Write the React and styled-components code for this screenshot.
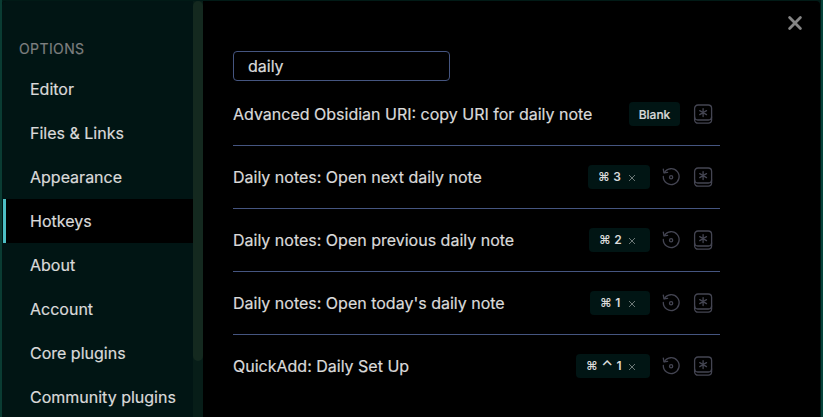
import React from "react";
import styled, { createGlobalStyle } from "styled-components";

const GlobalStyle = createGlobalStyle`
  * { box-sizing: border-box; }
  body { margin: 0; background: #07372d; overflow: hidden; }
`;

const Backdrop = styled.div`
  width: 823px;
  height: 417px;
  padding: 1px 3px 0 2px;
  background: linear-gradient(90deg, #0a3c33 0, #0a3c33 2px, #011a16 2px, #011a16 821px, #04443a 821px);
  font-family: Inter, "Noto Sans", sans-serif;
  font-size: 16px;
  color: #dadada;
`;

const Modal = styled.div`
  display: flex;
  height: 416px;
  border-radius: 4px 4px 0 0;
  background: #000;
  overflow: hidden;
`;

const Sidebar = styled.nav`
  width: 191px;
  flex: none;
  padding: 36px 0 0 1px;
  background: #011514;
`;

const SidebarTitle = styled.div`
  height: 30px;
  padding-left: 16px;
  line-height: 24px;
  font-size: 14px;
  letter-spacing: 0.4px;
  color: #7d7f7f;
  -webkit-text-stroke: 0.2px currentColor;
`;

const NavItem = styled.div`
  height: 44px;
  padding-left: 24px;
  border-left: 3px solid ${(p) => (p.$active ? "#4dbfc4" : "transparent")};
  background: ${(p) => (p.$active ? "#000" : "transparent")};
  line-height: 44px;
  white-space: nowrap;
  -webkit-text-stroke: 0.2px currentColor;
`;

const ScrollTrack = styled.div`
  width: 10px;
  flex: none;
  background: #071d18;
`;

const ScrollThumb = styled.div`
  height: 360px;
  border-radius: 5px;
  background: #14291f;
`;

const Content = styled.main`
  flex: 1;
  position: relative;
  padding: 50px 0 0 30px;
`;

const CloseButton = styled.button`
  position: absolute;
  top: 14px;
  right: 17px;
  width: 16px;
  height: 16px;
  padding: 0;
  border: 0;
  background: none;
  color: #858585;
  svg { display: block; }
`;

const SearchInput = styled.input`
  display: block;
  width: 217px;
  height: 30px;
  padding: 0 14px;
  border: 1px solid #455580;
  border-radius: 4px;
  background: #000;
  color: #dadada;
  font: inherit;
  outline: none;
  -webkit-text-stroke: 0.2px currentColor;
`;

const Row = styled.div`
  display: flex;
  align-items: center;
  width: 487px;
  height: ${(p) => (p.$first ? 65 : 63)}px;
  padding: ${(p) => (p.$first ? 2 : 0)}px 7px 0 0;
  border-bottom: 1px solid ${(p) => (p.$last ? "transparent" : "#455580")};
`;

const RowName = styled.div`
  flex: 1;
  white-space: nowrap;
  -webkit-text-stroke: 0.2px currentColor;
`;

const KeyBadge = styled.div`
  display: flex;
  align-items: center;
  justify-content: space-between;
  width: ${(p) => p.$width}px;
  height: 24px;
  padding: 0 14px 0 10px;
  border-radius: 4px;
  background: #011514;
  font-size: 12px;
  font-weight: 600;
  svg { position: relative; top: 1px; }
`;

const EmptyBadge = styled(KeyBadge)`
  padding: 0;
  justify-content: center;
  font-weight: 500;
  -webkit-text-stroke: 0.2px currentColor;
`;

const Keys = styled.span`
  display: flex;
  align-items: center;
  gap: 3.5px;
`;

const Key = styled.span`
  line-height: 16px;
  font-size: ${(p) => (p.$caret ? 15 : 12)}px;
  font-weight: ${(p) => (p.$caret ? 500 : 600)};
`;

const IconSlot = styled.div`
  width: 20px;
  height: 20px;
  margin-left: ${(p) => p.$gap}px;
  color: #444552;
  svg { display: block; }
`;

const CloseIcon = () => (
  <svg width="16" height="16" viewBox="0 0 16 16" fill="none" stroke="currentColor" strokeWidth="2.8" strokeLinecap="round">
    <path d="M2.6 2.6l10.8 10.8M13.4 2.6L2.6 13.4" />
  </svg>
);

const RemoveIcon = () => (
  <svg width="8" height="8" viewBox="0 0 8 8" fill="none" stroke="#87908f" strokeWidth="0.8">
    <path d="M1 1l6 6M7 1L1 7" />
  </svg>
);

const RestoreIcon = () => (
  <svg width="20" height="20" viewBox="0 0 20 20" fill="none" stroke="currentColor" strokeWidth="1.3" strokeLinecap="round" strokeLinejoin="round">
    <path d="M3.4 5.6A7.9 7.9 0 1 1 2.3 9.5" />
    <path d="M2.3 2.2l.7 3.6 3.6-.4" />
    <circle cx="10.1" cy="10.3" r="1.6" />
  </svg>
);

const AddKeyIcon = () => (
  <svg width="20" height="20" viewBox="0 0 20 20" fill="none" stroke="currentColor" strokeWidth="1.3" strokeLinecap="round">
    <rect x="1.6" y="1" width="17" height="18.2" rx="3.4" />
    <path d="M1.6 12.8q0 3.2 3.2 3.2h10.6q3.2 0 3.2-3.2" />
    <path d="M10.1 4.6v8M6.7 6.6l6.8 4M13.5 6.6l-6.8 4" />
  </svg>
);

const navItems = ["Editor", "Files & Links", "Appearance", "Hotkeys", "About", "Account", "Core plugins", "Community plugins"];

const hotkeys = [
  { name: "Advanced Obsidian URI: copy URI for daily note", width: 51 },
  { name: "Daily notes: Open next daily note", keys: ["⌘", "3"], width: 62 },
  { name: "Daily notes: Open previous daily note", keys: ["⌘", "2"], width: 61 },
  { name: "Daily notes: Open today's daily note", keys: ["⌘", "1"], width: 60 },
  { name: "QuickAdd: Daily Set Up", keys: ["⌘", "⌃", "1"], width: 74 },
];

export default function App() {
  return (
    <>
      <GlobalStyle />
      <Backdrop>
        <Modal>
          <Sidebar>
            <SidebarTitle>OPTIONS</SidebarTitle>
            {navItems.map((item) => (
              <NavItem key={item} $active={item === "Hotkeys"}>{item}</NavItem>
            ))}
          </Sidebar>
          <ScrollTrack><ScrollThumb /></ScrollTrack>
          <Content>
            <CloseButton aria-label="Close"><CloseIcon /></CloseButton>
            <SearchInput defaultValue="daily" />
            {hotkeys.map((h, i) => (
              <Row key={h.name} $first={i === 0} $last={i === hotkeys.length - 1}>
                <RowName>{h.name}</RowName>
                {h.keys ? (
                  <>
                    <KeyBadge $width={h.width}>
                      <Keys>
                        {h.keys.map((k) => <Key key={k} $caret={k === "⌃"}>{k}</Key>)}
                      </Keys>
                      <RemoveIcon />
                    </KeyBadge>
                    <IconSlot $gap={11}><RestoreIcon /></IconSlot>
                  </>
                ) : (
                  <EmptyBadge $width={h.width}>Blank</EmptyBadge>
                )}
                <IconSlot $gap={h.keys ? 12 : 13}><AddKeyIcon /></IconSlot>
              </Row>
            ))}
          </Content>
        </Modal>
      </Backdrop>
    </>
  );
}
